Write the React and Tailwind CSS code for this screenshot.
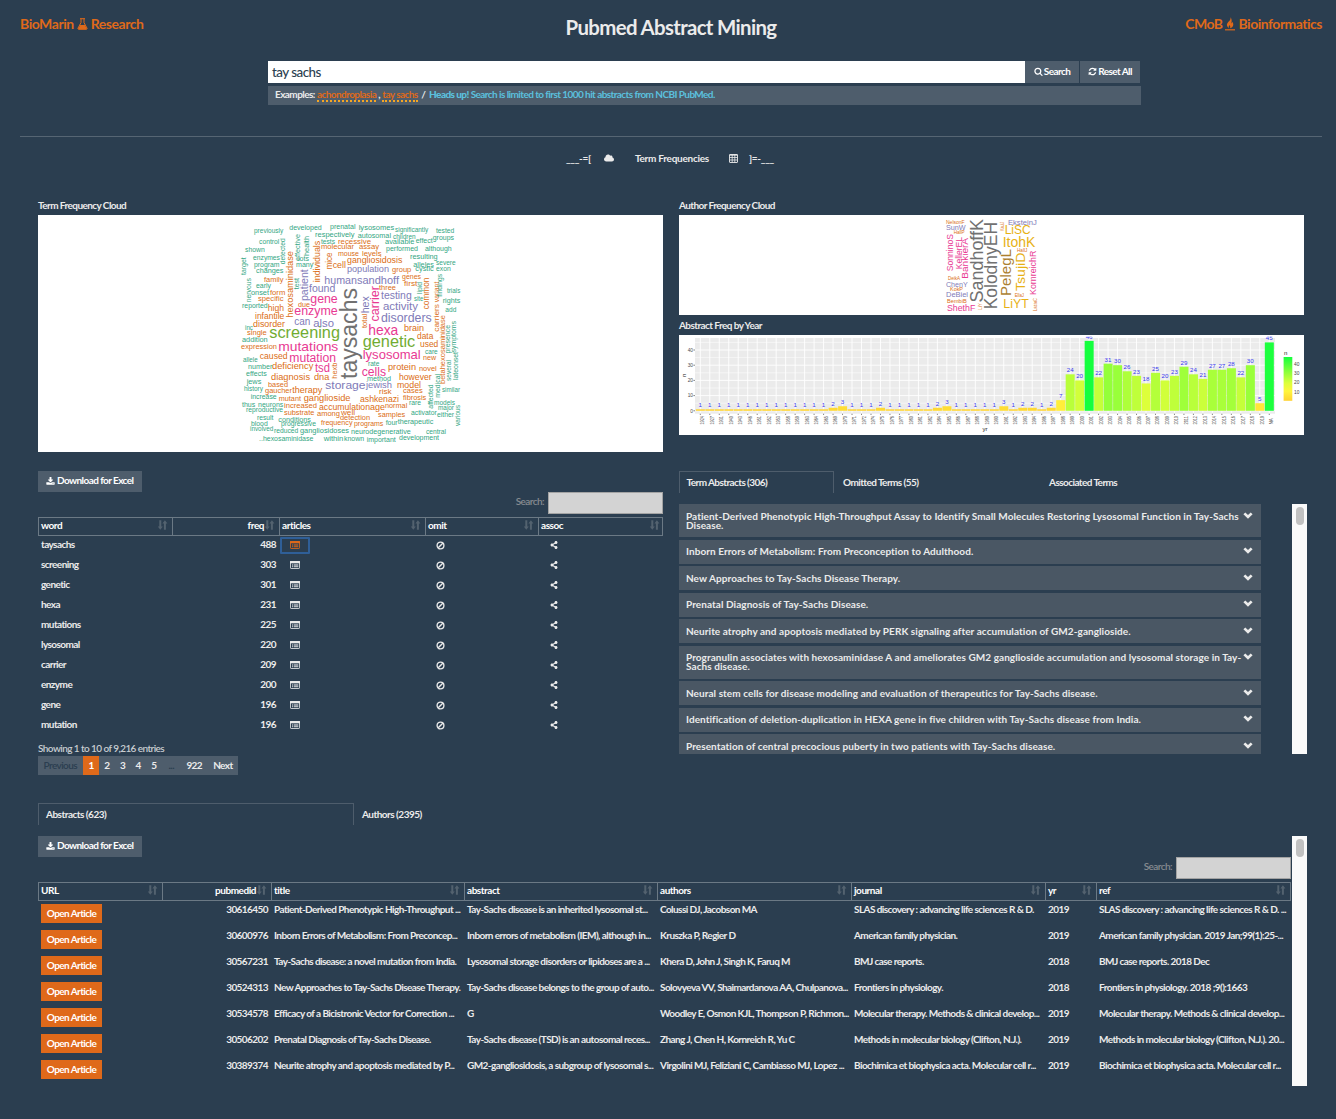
import React from 'react';
import { FaCloud, FaShareAlt } from 'react-icons/fa';

const TEAL = '#1b9e77', ORANGE = '#d95f02', PURPLE = '#7570b3', PINK = '#e7298a', GREEN = '#66a61e', GOLD = '#e6ab02', BROWN = '#a6761d', GRAY = '#666666';

// Horizontal words: text, left, right, baseline, size, colour
const H = [
  ['previously', 254, 283.3, 233, 7, TEAL], ['developed', 289.3, 321.7, 230, 7, TEAL], ['prenatal', 330, 355.5, 229, 7, TEAL],
  ['lysosomes', 358.7, 394.3, 230, 7, TEAL], ['significantly', 395, 428.3, 232, 7, TEAL], ['tested', 436, 454.3, 233, 7, TEAL],
  ['respectively', 315, 354.5, 237, 7, TEAL], ['autosomal', 357.7, 391, 238, 7, TEAL], ['children', 393, 415.7, 239, 7, TEAL],
  ['groups', 432.7, 454, 240, 7, TEAL], ['control', 259, 279.3, 244, 7, TEAL], ['tests', 321, 335, 243.5, 7, TEAL],
  ['recessive', 338, 371, 244, 7.6, ORANGE], ['available', 385, 414.3, 244, 7, TEAL], ['effect', 415.7, 432.7, 243, 7, TEAL],
  ['shown', 245, 264.7, 252, 7, TEAL], ['molecular', 321, 354, 249, 7.6, ORANGE], ['assay', 359, 379, 248.7, 7.8, ORANGE],
  ['performed', 386, 418, 251, 7, TEAL], ['although', 425, 451.7, 251, 7, TEAL], ['enzymes', 253, 280, 260, 7, TEAL],
  ['lots', 298, 309, 261, 7, TEAL], ['mouse', 338, 359, 256, 7.4, ORANGE], ['levels', 362, 381.5, 256, 7.4, ORANGE],
  ['program', 254, 279.5, 267, 7, TEAL], ['many', 296, 313.3, 267, 7, TEAL], ['cell', 332.7, 346, 268, 9, ORANGE],
  ['gangliosidosis', 347, 402.3, 263, 9.3, ORANGE], ['resulting', 410, 437.7, 259, 7, TEAL], ['alleles', 413.3, 434, 267, 7, TEAL],
  ['severe', 436, 455.7, 265, 7, TEAL], ['changes', 256, 283.5, 273, 7, TEAL], ['population', 347, 389, 272, 9.5, PURPLE],
  ['group', 392, 411.3, 272, 7.6, ORANGE], ['cystic', 415.3, 433.7, 271, 7, TEAL], ['exon', 436, 450.7, 271, 7, TEAL],
  ['family', 264, 283.5, 282, 7.6, ORANGE], ['human', 324.3, 357, 284, 10.8, PURPLE], ['sandhoff', 357, 399, 284, 11, PURPLE],
  ['genes', 402, 421, 279, 7.6, ORANGE], ['first', 404, 417.3, 285.5, 7.6, ORANGE], ['early', 256, 271, 287.5, 7, TEAL],
  ['found', 309, 335.3, 292, 10.5, PURPLE], ['three', 379, 396, 290, 7.8, ORANGE], ['onset', 251, 269, 295, 7.2, TEAL],
  ['form', 270, 285.3, 295, 7.8, ORANGE], ['specific', 258, 283.5, 301, 7.6, ORANGE], ['gene', 310.3, 337.7, 302.5, 12.3, PINK],
  ['testing', 381, 411.7, 299, 10.8, PURPLE], ['activity', 383, 418, 310, 11, PURPLE], ['site', 414, 423.3, 301, 7, TEAL],
  ['trials', 447, 460.3, 293, 7, TEAL], ['rights', 442.7, 460.3, 303, 7, TEAL], ['add', 445.3, 456.3, 312, 7, TEAL],
  ['reported', 242, 267.7, 308, 7, TEAL], ['due', 298, 310, 307, 7.8, ORANGE], ['high', 267.7, 284, 311, 9.2, ORANGE],
  ['enzyme', 294.3, 337.7, 315, 12.4, PINK], ['infantile', 255, 284.3, 319, 8.6, ORANGE], ['disorder', 253, 285, 327, 8.8, ORANGE],
  ['can', 294.3, 310.3, 324.5, 10.2, PURPLE], ['also', 313.3, 334, 326.7, 11, PURPLE], ['disorders', 381, 431.7, 322, 12.3, PURPLE],
  ['inc', 245, 253, 330, 7, TEAL], ['single', 247, 266.7, 335, 7.6, ORANGE], ['screening', 269.3, 340, 338, 16.3, GREEN],
  ['hexa', 368.3, 398.3, 334.7, 13.8, PINK], ['brain', 404, 424, 331, 8.8, ORANGE], ['addition', 242, 267.7, 342, 7, TEAL],
  ['expression', 241, 277, 349, 7.7, ORANGE], ['mutations', 278.3, 338.3, 351, 13.6, PINK], ['caused', 259.7, 287.7, 359, 8.8, ORANGE],
  ['mutation', 289.3, 336, 362, 12, PINK], ['allele', 243, 257.7, 361.5, 7, TEAL], ['number', 248, 272.3, 369, 7.2, TEAL],
  ['deficiency', 272, 313.3, 369, 9.4, ORANGE], ['tsd', 315, 330, 372, 12, PINK], ['effects', 246, 266.7, 376, 7, TEAL],
  ['diagnosis', 271, 310, 379.5, 9.3, ORANGE], ['dna', 314, 329.3, 379.5, 9.2, ORANGE], ['jews', 246.7, 261.3, 384, 7, TEAL],
  ['based', 268, 288, 387, 7.6, ORANGE], ['history', 244, 263, 391, 7, TEAL], ['gaucher', 265, 292, 393, 7.6, ORANGE],
  ['therapy', 292.3, 322.3, 392.5, 8.8, ORANGE], ['storage', 325.3, 365.5, 389, 11.6, PURPLE], ['jewish', 366, 392, 388, 9.5, PURPLE],
  ['increase', 250.7, 276.7, 399, 7, TEAL], ['mutant', 278.7, 301, 401, 7.4, ORANGE], ['ganglioside', 303.7, 350.5, 401, 9.2, ORANGE],
  ['thus', 242, 255.3, 407, 7, TEAL], ['neurons', 258, 283.3, 407, 7, TEAL], ['increased', 284, 317, 408, 7.8, ORANGE],
  ['accumulation', 319, 370, 410, 8.9, ORANGE], ['age', 370, 385, 410, 9, ORANGE], ['reproductive', 246, 283, 412, 7, TEAL],
  ['substrate', 284, 314.3, 415, 7.6, ORANGE], ['among', 317, 340, 416, 7.6, ORANGE], ['well', 341, 355, 415, 8, ORANGE],
  ['result', 257, 273.3, 420, 7, TEAL], ['conditions', 278.3, 311, 422, 7, TEAL], ['detection', 340, 370, 420, 7.6, ORANGE],
  ['frequency', 321, 352.5, 425, 7.6, ORANGE], ['blood', 251, 267.7, 426, 7, TEAL], ['progressive', 281, 316, 426, 7, TEAL],
  ['involved', 250, 273.3, 431, 7, TEAL], ['reduced', 274, 298.3, 433, 7, TEAL], ['gangliosidoses', 300, 349, 433, 7.2, TEAL],
  ['..hexosaminidase', 259, 313.3, 441, 7, TEAL], ['within', 323.7, 343.3, 441, 7, TEAL], ['known', 344, 364, 441, 7, TEAL],
  ['data', 417, 433.3, 339, 8.7, ORANGE], ['genetic', 362.7, 415.3, 346.5, 16.3, GREEN], ['used', 420, 438.3, 347, 8.7, ORANGE],
  ['care', 425, 437.7, 354, 7, TEAL], ['lysosomal', 362.7, 420.7, 359, 13, PINK], ['new', 423, 436, 360, 7.6, ORANGE],
  ['rate', 368, 379.3, 366, 7, TEAL], ['cells', 361.7, 386, 376, 12.2, PINK], ['protein', 388, 416, 370, 8.8, ORANGE],
  ['novel', 419, 436.7, 371, 7.6, ORANGE], ['however', 399, 431.7, 379.5, 8.8, ORANGE], ['method', 367, 391, 381, 7, TEAL],
  ['model', 397, 421, 388, 9, ORANGE], ['risk', 379, 391.7, 394, 7.6, ORANGE], ['cases', 403, 422.7, 393, 7.4, ORANGE],
  ['similar', 442, 460, 392, 7, TEAL], ['ashkenazi', 360, 399, 402, 8.8, ORANGE], ['fibrosis', 403, 426.3, 400, 7.4, ORANGE],
  ['rare', 409, 421, 405, 7, TEAL], ['models', 434, 455, 405, 7, TEAL], ['normal', 385, 407.3, 408, 7.6, ORANGE],
  ['major', 438, 454, 410, 7, TEAL], ['activator', 411, 436.7, 415, 7, TEAL], ['either', 437, 454, 417, 7, TEAL],
  ['samples', 378, 405.3, 417, 7.4, ORANGE], ['programs', 354, 383.3, 426, 7.4, ORANGE], ['four', 385.7, 397.7, 425, 7, TEAL],
  ['therapeutic', 397.7, 433.3, 424, 7, TEAL], ['neurodegenerative', 351, 410.7, 434, 7, TEAL], ['central', 426, 446, 434, 7, TEAL],
  ['important', 366.7, 395.7, 442, 7, TEAL], ['development', 399, 439, 440, 7, TEAL],
];

// Vertical words: text, top, bottom, baseline x, size, colour
const V = [
  ['effective', 234, 261, 300.3, 7, TEAL], ['health', 236, 256, 309, 7, TEAL], ['detected', 238.3, 264.3, 285.3, 7, TEAL],
  ['hexosaminidase', 251, 317.7, 292.8, 9.3, ORANGE], ['individuals', 240.7, 282.3, 320, 8.8, ORANGE], ['mice', 252.7, 269.3, 332, 8.8, ORANGE],
  ['target', 257.3, 275, 245.7, 7, TEAL], ['nervous', 278, 302.3, 250.5, 7, TEAL], ['test', 278, 289.3, 298.5, 7, TEAL],
  ['patient', 269.3, 301, 307.5, 10.5, PURPLE], ['taysachs', 288, 379, 357, 23, GRAY], ['hex', 296.3, 313.3, 369.3, 10.5, PURPLE],
  ['total', 313.7, 328, 367, 7.4, ORANGE], ['carrier', 286, 321.5, 378.8, 12.6, PINK], ['lipid', 282, 294, 421.5, 7, TEAL],
  ['common', 277.7, 309.3, 429, 8.4, ORANGE], ['variant', 281.7, 302.3, 439, 7.2, ORANGE], ['carriers', 304, 331.7, 439, 7.6, ORANGE],
  ['findings', 274, 296.7, 442.3, 7, TEAL], ['betahexosaminidase', 315, 384, 444.5, 7.4, ORANGE], ['presence', 325, 353.5, 449.7, 7, TEAL],
  ['symptoms', 321, 352.5, 455.7, 7, TEAL], ['several', 360, 381, 451.3, 7, TEAL], ['lateonset', 352, 380, 458, 7, TEAL],
  ['medical', 374, 397.7, 439.7, 7, TEAL], ['affected', 384.3, 408.7, 433.3, 7, TEAL], ['various', 405, 426, 460, 7, TEAL],
  ['hexb', 362.7, 378.7, 337.3, 7.4, ORANGE],
];

const AH = [
  ['NelsonF', 946, 964.7, 224, 5.3, ORANGE], ['SunW', 946, 965.7, 229.5, 7.2, PURPLE], ['HallP', 953.7, 964.7, 233.7, 5.2, ORANGE],
  ['EksteinJ', 1008, 1036.7, 225.2, 7.6, PURPLE], ['LiSC', 1004.7, 1030.7, 233.7, 12, GOLD], ['ItohK', 1002.7, 1035.3, 246.7, 14, GOLD],
  ['HallJ', 1017, 1027.3, 251.8, 5.2, ORANGE], ['DeikA', 948, 960, 279.8, 5.2, ORANGE], ['ChenY', 946, 967.7, 286.7, 7.4, PURPLE],
  ['KokP', 950, 963, 291, 5.2, ORANGE], ['DeBiel', 946, 968, 297.4, 7.4, PURPLE], ['BembiB', 947, 966.7, 303, 5.4, ORANGE],
  ['ShethF', 947, 975.3, 311, 9, PINK], ['LiYT', 1003.3, 1028.7, 308, 12.5, GOLD], ['EllaJ', 1014.7, 1024, 297.4, 5.2, ORANGE],
];
const AV = [
  ['SonninoS', 234, 271.3, 953.3, 9, PINK], ['KellerEL', 237, 269.3, 961.7, 9, PINK], ['BankierA', 238, 278.7, 968.3, 9, PINK],
  ['SandhoffK', 219, 302.5, 983, 17.8, GRAY], ['KolodnyEH', 222, 309.3, 997, 17.5, GRAY], ['KaulJ', 222, 230.7, 1004, 5.2, ORANGE],
  ['PelegL', 249, 296, 1011, 15.1, BROWN], ['TsujiD', 252.7, 291, 1024.7, 13.5, GOLD], ['KornreichR', 250.7, 295, 1036, 9, PINK],
  ['LiY', 303, 310, 982, 5.2, ORANGE], ['LazarC', 298, 311, 1037, 5.2, ORANGE],
];

function Words({ h, v }) {
  return (
    <g opacity="0.92">
      {h.map(([t, x0, x1, y, s, c]) => (
        <text key={'h' + t} x={x0} y={y} fontSize={s} fill={c} textLength={x1 - x0} lengthAdjust="spacingAndGlyphs">{t}</text>
      ))}
      {v.map(([t, y0, y1, x, s, c]) => (
        <text key={'v' + t} transform={`translate(${x} ${y1}) rotate(-90)`} fontSize={s} fill={c} textLength={y1 - y0} lengthAdjust="spacingAndGlyphs">{t}</text>
      ))}
    </g>
  );
}

const YEARS = [1924, 1927, 1931, 1940, 1943, 1946, 1951, 1952, 1953, 1958, 1959, 1963, 1964, 1965, 1969, 1970, 1971, 1972, 1974, 1975, 1976, 1977, 1980, 1981, 1982, 1984, 1985, 1986, 1987, 1988, 1989, 1990, 1991, 1992, 1993, 1994, 1996, 1997, 1998, 1999, 2000, 2001, 2002, 2003, 2004, 2005, 2006, 2007, 2008, 2009, 2010, 2011, 2012, 2013, 2014, 2015, 2016, 2017, 2018, 2019, 'NA'];
const COUNTS = [1, 1, 1, 1, 1, 1, 1, 1, 1, 1, 1, 1, 1, 1, 2, 3, 1, 1, 1, 2, 1, 1, 1, 1, 1, 2, 3, 1, 1, 1, 1, 1, 3, 1, 2, 2, 1, 2, 7, 24, 20, 46, 22, 31, 30, 26, 23, 18, 25, 20, 23, 29, 24, 21, 27, 27, 28, 22, 30, 5, 45];
const STOPS = [[1, 255, 213, 51], [7, 255, 238, 58], [12, 250, 255, 62], [18, 221, 255, 58], [24, 185, 255, 58], [31, 148, 255, 58], [46, 20, 255, 62]];
function barColor(n) {
  for (let i = 1; i < STOPS.length; i++) {
    const a = STOPS[i - 1], b = STOPS[i];
    if (n <= b[0]) {
      const f = (n - a[0]) / (b[0] - a[0]);
      return `rgb(${[1, 2, 3].map((k) => Math.round(a[k] + f * (b[k] - a[k]))).join(',')})`;
    }
  }
  return 'rgb(20,255,62)';
}

function YearChart() {
  const cx = (i) => 700.3 + i * 9.483;
  const yy = (n) => 410.8 - n * 1.52;
  return (
    <svg className="block h-[100px] w-[625px] bg-white font-['Liberation_Sans']" viewBox="679 335 625 100">
      <rect x="695" y="338" width="580" height="75.7" fill="#ebebeb" />
      {[5, 15, 25, 35, 45].map((n) => <line key={n} x1="695" x2="1275" y1={yy(n)} y2={yy(n)} stroke="#fff" strokeWidth="0.5" />)}
      {[0, 10, 20, 30, 40].map((n) => (
        <g key={n}>
          <line x1="695" x2="1275" y1={yy(n)} y2={yy(n)} stroke="#fff" strokeWidth="0.9" />
          <line x1="693.4" x2="695" y1={yy(n)} y2={yy(n)} stroke="#333" strokeWidth="0.6" />
          <text x="693" y={yy(n) + 1.8} fontSize="4.8" fill="#4d4d4d" textAnchor="end">{n}</text>
        </g>
      ))}
      {YEARS.map((y, i) => (
        <g key={y}>
          <line x1={cx(i)} x2={cx(i)} y1="338" y2="413.7" stroke="#fff" strokeWidth="0.9" />
          <line x1={cx(i)} x2={cx(i)} y1="413.7" y2="415" stroke="#333" strokeWidth="0.6" />
          <text transform={`translate(${cx(i) + 4} 424.5) rotate(-90)`} fontSize="5.2" fill="#4d4d4d" textLength={y === 'NA' ? 6.5 : 8.3} lengthAdjust="spacingAndGlyphs">{y}</text>
        </g>
      ))}
      {YEARS.map((y, i) => {
        const n = COUNTS[i];
        return (
          <g key={y}>
            <rect x={cx(i) - 4.45} y={yy(n)} width="9" height={n * 1.52} fill={barColor(n)} />
            <text x={cx(i)} y={yy(n) - 2} fontSize="6.2" fill="#3a3af0" textAnchor="middle">{n}</text>
          </g>
        );
      })}
      <rect x="679" y="335" width="625" height="1.6" fill="#fff" />
      <text x="985" y="431" fontSize="6" fill="#222" textAnchor="middle">yr</text>
      <text transform="translate(686 377) rotate(-90)" fontSize="6" fill="#222">n</text>
      <text x="1284" y="355" fontSize="6" fill="#222">n</text>
      <defs>
        <linearGradient id="scale" x1="0" y1="0" x2="0" y2="1">
          <stop offset="0" stopColor="#14ff3e" /><stop offset="0.37" stopColor="#94ff3a" /><stop offset="0.6" stopColor="#ddff3a" /><stop offset="0.78" stopColor="#fff53e" /><stop offset="1" stopColor="#ffd233" />
        </linearGradient>
      </defs>
      <rect x="1283.6" y="357" width="8.7" height="43.8" fill="url(#scale)" />
      {[[40, 363.7], [30, 373], [20, 382.6], [10, 392]].map(([n, y]) => (
        <text key={n} x="1294" y={y + 1.8} fontSize="4.8" fill="#444">{n}</text>
      ))}
    </svg>
  );
}

const SearchIcon = () => (
  <svg viewBox="0 0 1792 1792" className="size-[9px] fill-current"><path d="M1216 832q0-185-131.5-316.5t-316.5-131.5-316.5 131.5-131.5 316.5 131.5 316.5 316.5 131.5 316.5-131.5 131.5-316.5zm512 832q0 52-38 90t-90 38q-54 0-90-38l-343-342q-179 124-399 124-143 0-273.5-55.5t-225-150-150-225-55.5-273.5 55.5-273.5 150-225 225-150 273.5-55.5 273.5 55.5 225 150 150 225 55.5 273.5q0 220-124 399l343 343q37 37 37 90z" /></svg>
);
const RefreshIcon = () => (
  <svg viewBox="0 0 1792 1792" className="size-[9px] fill-current"><path d="M1639 1056q0 5-1 7-64 268-268 434.5t-478 166.5q-146 0-282.5-55t-243.5-157l-129 129q-19 19-45 19t-45-19-19-45v-448q0-26 19-45t45-19h448q26 0 45 19t19 45-19 45l-137 137q71 66 161 102t187 36q134 0 250-65t186-179q11-17 53-117 8-23 30-23h192q13 0 22.5 9.5t9.5 22.5zm25-800v448q0 26-19 45t-45 19h-448q-26 0-45-19t-19-45 19-45l138-138q-148-137-349-137-134 0-250 65t-186 179q-11 17-53 117-8 23-30 23h-199q-13 0-22.5-9.5t-9.5-22.5v-7q65-268 270-434.5t480-166.5q146 0 284 55.5t245 156.5l130-129q19-19 45-19t45 19 19 45z" /></svg>
);
const DownloadIcon = () => (
  <svg viewBox="0 0 1792 1792" className="size-[9px] fill-current"><path d="M1344 1344q0-26-19-45t-45-19-45 19-19 45 19 45 45 19 45-19 19-45zm256 0q0-26-19-45t-45-19-45 19-19 45 19 45 45 19 45-19 19-45zm128-224v320q0 40-28 68t-68 28h-1472q-40 0-68-28t-28-68v-320q0-40 28-68t68-28h465l135 136q58 56 136 56t136-56l136-136h464q40 0 68 28t28 68zm-325-569q17 41-14 70l-448 448q-18 19-45 19t-45-19l-448-448q-31-29-14-70 17-39 59-39h256v-448q0-26 19-45t45-19h256q26 0 45 19t19 45v448h256q42 0 59 39z" /></svg>
);
const FlaskIcon = () => (
  <svg viewBox="0 0 11 12" className="h-3 w-[11px]" fill="none" stroke="currentColor"><path d="M3 .7h5" strokeWidth="1.1" /><path d="M4 1v3.6L1 10.2c-.3.7 0 1.1.7 1.1h7.6c.7 0 1-.4.7-1.1L7 4.600V1" strokeWidth="1" /><path d="M3.200 7h4.600l2 3.500c.2.500 0 .8-.4.8H1.600c-.4 0-.6-.3-.4-.8z" fill="currentColor" stroke="none" /></svg>
);
const FireIcon = () => (
  <svg viewBox="0 0 10 14" className="h-[14px] w-[10px] fill-current"><path d="M5.300 0c.7 1.500.2 2.500-1 4C2.800 5.500 1.500 6.800 2 8.700c.3 1 1 1.800 2 2.500-.5-1.300-.2-2.200.5-3.100.3.800.8 1.200.8 2 0 .4-.1.800-.3 1.200 1.900-.5 3.300-1.800 3.300-3.700 0-1.200-.5-2-1-2.800 0 .9-.3 1.400-.9 1.700C6.800 4 7 1.700 5.300 0z" /><rect y="12.200" width="10" height="1.200" /></svg>
);
const TableIcon = () => (
  <svg viewBox="0 0 9 9" className="size-[9px]" fill="none" stroke="currentColor"><rect x=".5" y=".5" width="8" height="8" rx=".5" strokeWidth=".9" /><path d="M.5 1h8" strokeWidth="1.200" /><path d="M.5 3.500h8M.5 6h8M3.200 1v7.500M5.800 1v7.500" strokeWidth=".8" /></svg>
);
const ArticlesIcon = () => (
  <svg viewBox="0 0 10 8" className="h-2 w-[10px]" fill="none" stroke="currentColor"><rect x=".5" y=".5" width="9" height="7" rx=".6" strokeWidth="1" strokeOpacity=".8" /><path d="M0 1.200h10" strokeWidth="2.200" /><path d="M2 4h1M3.700 4h4.600M2 5.600h1M3.700 5.600h4.600" strokeWidth="1.300" strokeOpacity=".7" /></svg>
);
const BanIcon = () => (
  <svg viewBox="0 0 9 9" className="size-[9px]" fill="none" stroke="currentColor" strokeWidth="1.350"><circle cx="4.500" cy="4.500" r="3.400" /><path d="M2.200 6.800l4.600-4.600" /></svg>
);
const SortIcon = () => (
  <svg viewBox="0 0 10 10" className="h-[10px] w-[11px] shrink-0 fill-[#53626f]"><path d="M1.800 .3h2v6.200h1.500L2.800 9.800.300 6.500h1.500zM6.400 9.700V3.500H4.900L7.400.2l2.500 3.300H8.400v6.200z" /></svg>
);
const ChevronIcon = () => (
  <svg viewBox="0 0 10 7" className="-ml-2 h-[7px] w-[10px] shrink-0 fill-[#ebebeb]"><path d="M.4 2.200L2.300.4 5 3 7.700.4l1.900 1.800L5 6.800z" /></svg>
);

const DownloadButton = () => (
  <button className="flex h-[21px] w-[104px] items-center gap-px bg-[#4e5d6c] pb-px pl-2 text-white">
    <DownloadIcon /><span className="pb-[3px] pl-px">Download for Excel</span>
  </button>
);
const TableSearch = () => (
  <div className="flex h-[22px] items-center justify-end gap-1">
    <span className="pb-[5px] font-semibold text-[#868b90]">Search:</span>
    <input className="h-[22px] w-[115px] border border-[#a3a3a3] bg-[#d3d3d3] outline-none" />
  </div>
);
const Th = ({ children, right }) => (
  <div className="flex items-center justify-between border-r border-[#6b7985] pl-[2px] pr-1 last:border-r-0">
    <span className={right ? 'flex-1 pb-1 text-right' : 'pb-1'}>{children}</span>
    <div className="pb-1"><SortIcon /></div>
  </div>
);
const Scrollbar = () => (
  <div className="flex h-[250px] w-[15px] justify-center bg-[#fafafa] pt-[3px]"><div className="h-[18px] w-2 rounded-full bg-[#c1c1c1]" /></div>
);

const TERMS = [['taysachs', 488], ['screening', 303], ['genetic', 301], ['hexa', 231], ['mutations', 225], ['lysosomal', 220], ['carrier', 209], ['enzyme', 200], ['gene', 196], ['mutation', 196]];

const TITLES = [
  'Patient-Derived Phenotypic High-Throughput Assay to Identify Small Molecules Restoring Lysosomal Function in Tay-Sachs Disease.',
  'Inborn Errors of Metabolism: From Preconception to Adulthood.',
  'New Approaches to Tay-Sachs Disease Therapy.',
  'Prenatal Diagnosis of Tay-Sachs Disease.',
  'Neurite atrophy and apoptosis mediated by PERK signaling after accumulation of GM2-ganglioside.',
  'Progranulin associates with hexosaminidase A and ameliorates GM2 ganglioside accumulation and lysosomal storage in Tay-Sachs disease.',
  'Neural stem cells for disease modeling and evaluation of therapeutics for Tay-Sachs disease.',
  'Identification of deletion-duplication in HEXA gene in five children with Tay-Sachs disease from India.',
  'Presentation of central precocious puberty in two patients with Tay-Sachs disease.',
];

const ROWS = [
  ['30616450', 'Patient-Derived Phenotypic High-Throughput ...', 'Tay-Sachs disease is an inherited lysosomal st...', 'Colussi DJ, Jacobson MA', 'SLAS discovery : advancing life sciences R & D.', '2019', 'SLAS discovery : advancing life sciences R & D. ...'],
  ['30600976', 'Inborn Errors of Metabolism: From Preconcep...', 'Inborn errors of metabolism (IEM), although in...', 'Kruszka P, Regier D', 'American family physician.', '2019', 'American family physician. 2019 Jan;99(1):25-...'],
  ['30567231', 'Tay-Sachs disease: a novel mutation from India.', 'Lysosomal storage disorders or lipidoses are a ...', 'Khera D, John J, Singh K, Faruq M', 'BMJ case reports.', '2018', 'BMJ case reports. 2018 Dec'],
  ['30524313', 'New Approaches to Tay-Sachs Disease Therapy.', 'Tay-Sachs disease belongs to the group of auto...', 'Solovyeva VV, Shaimardanova AA, Chulpanova...', 'Frontiers in physiology.', '2018', 'Frontiers in physiology. 2018 ;9():1663'],
  ['30534578', 'Efficacy of a Bicistronic Vector for Correction ...', 'G', 'Woodley E, Osmon KJL, Thompson P, Richmon...', 'Molecular therapy. Methods & clinical develop...', '2019', 'Molecular therapy. Methods & clinical develop...'],
  ['30506202', 'Prenatal Diagnosis of Tay-Sachs Disease.', 'Tay-Sachs disease (TSD) is an autosomal reces...', 'Zhang J, Chen H, Kornreich R, Yu C', 'Methods in molecular biology (Clifton, N.J.).', '2019', 'Methods in molecular biology (Clifton, N.J.). 20...'],
  ['30389374', 'Neurite atrophy and apoptosis mediated by P...', 'GM2-gangliosidosis, a subgroup of lysosomal s...', 'Virgolini MJ, Feliziani C, Cambiasso MJ, Lopez ...', 'Biochimica et biophysica acta. Molecular cell r...', '2019', 'Biochimica et biophysica acta. Molecular cell r...'],
];

export default function App() {
  return (
    <div className="h-[1119px] w-[1336px] overflow-hidden bg-[#2b3e50] font-['Lato',sans-serif] text-[10px] font-bold leading-[12px] tracking-[-0.570px] whitespace-nowrap text-[#ebebeb]">
      <header className="grid h-[61px] grid-cols-[1fr_auto_1fr] pl-5 pr-3.5 pt-[15px]">
        <div className="flex h-[18px] items-center gap-[3px] text-sm tracking-[-0.450px] text-[#df691a]"><span>BioMarin</span><FlaskIcon /><span>Research</span></div>
        <h1 className="text-[20.400px] leading-6 tracking-[-0.650px]">Pubmed Abstract Mining</h1>
        <div className="flex h-[18px] items-center justify-end gap-[3px] text-sm tracking-[-0.500px] text-[#df691a]"><span>CMoB</span><FireIcon /><span>Bioinformatics</span></div>
      </header>

      <div className="ml-[268px] flex h-[22px] w-[872px]">
        <div className="flex flex-1 items-center bg-white pl-1 text-[13.333px] font-medium tracking-[-0.500px] text-[#2b3e50]">tay sachs</div>
        <button className="flex w-[54px] items-center justify-center gap-px bg-[#4e5d6c] pb-0.5 text-white"><SearchIcon /><span>Search</span></button>
        <button className="ml-px flex w-[60px] items-center justify-center gap-px bg-[#4e5d6c] pb-0.5 text-white"><RefreshIcon /><span>Reset All</span></button>
      </div>
      <div className="ml-[268px] mt-[3px] flex h-[19px] w-[873px] gap-[2.200px] bg-[#4e5d6c] pl-[7px] pt-0.5">
        <span>Examples:</span>
        <span className="h-[14px] border-b-2 border-dotted border-[#f5a623] text-[#df691a]">achondroplasia</span>
        <span>,</span>
        <span className="h-[14px] border-b-2 border-dotted border-[#f5a623] text-[#df691a]">tay sachs</span>
        <span className="px-[1.500px]">/</span>
        <span className="text-[#5bc0de]"><b className="font-black">Heads up!</b> Search is limited to first 1000 hit abstracts from NCBI PubMed.</span>
      </div>
      <div className="ml-5 mt-[31px] h-px w-[1302px] bg-[#566573]" />

      <div className="ml-[566px] mt-[14px] flex h-[14px] w-[211px] items-center">
        <span className="w-[38px] tracking-[-0.300px]">___-=[</span><FaCloud className="h-[10px] w-[10px]" /><span className="w-[94px] pl-[21px] tracking-[-0.270px]">Term Frequencies</span><span className="w-[41px] pl-[21px]"><TableIcon /></span><span className="tracking-[-0.300px]">]=-___</span>
      </div>

      <main className="mt-[34px] grid grid-cols-[625px_628px] gap-x-4 pl-[38px]">
        <section>
          <h2 className="h-4">Term Frequency Cloud</h2>
          <svg className="block h-[237px] w-[625px] bg-white font-['Liberation_Sans'] font-normal tracking-normal" viewBox="38 215 625 237"><Words h={H} v={V} /></svg>
        </section>
        <section className="font-normal tracking-normal">
          <h2 className="h-4 font-bold tracking-[-0.570px]">Author Frequency Cloud</h2>
          <svg className="block h-[100px] w-[625px] bg-white font-['Liberation_Sans']" viewBox="679 215 625 100"><Words h={AH} v={AV} /></svg>
          <h2 className="h-5 pt-1 font-bold tracking-[-0.570px]">Abstract Freq by Year</h2>
          <YearChart />
        </section>

        <section className="mt-[19px]">
          <DownloadButton />
          <TableSearch />
          <div className="mt-[3px] grid h-[19px] grid-cols-[134px_107px_146px_113px_125px] border border-[#6b7985] tracking-[-0.450px] text-white">
            <Th>word</Th><Th right>freq</Th><Th>articles</Th><Th>omit</Th><Th>assoc</Th>
          </div>
          <div className="-mt-px">
            {TERMS.map(([w, n], i) => (
              <div key={w} className="grid h-5 grid-cols-[134px_107px_146px_113px_125px] items-center">
                <span className="pb-0.5 pl-[3px]">{w}</span>
                <span className="pb-0.5 pr-[3px] text-right">{n}</span>
                <div className={i === 0 ? 'ml-px flex h-[17px] w-[30px] items-center justify-center rounded-[1px] border-2 border-[#2f5f98] text-[#df691a]' : 'ml-px flex h-[17px] w-[30px] items-center justify-center text-[#ebebeb]'}><ArticlesIcon /></div>
                <div className="pl-[11px]"><BanIcon /></div>
                <div className="pl-[11.500px]"><FaShareAlt className="size-[8px]" /></div>
              </div>
            ))}
          </div>
          <div className="mt-[7px] h-[13px] font-semibold tracking-[-0.570px] text-[#c8cdd1]">Showing 1 to 10 of 9,216 entries</div>
          <div className="mt-px flex h-[19px] w-[200px] items-center bg-[#4e5d6c]">
            <span className="w-[45px] pb-0.5 pl-[5.500px] font-semibold text-[#2b3e50]">Previous</span>
            <span className="flex h-full w-4 items-center justify-center bg-[#df691a] pb-0.5 text-white">1</span>
            {[2, 3, 4, 5].map((n) => <span key={n} className="w-[15.700px] pb-0.5 text-center">{n}</span>)}
            <span className="w-[19px] pb-0.5 text-center text-[#2b3e50]">...</span>
            <span className="w-[27px] pb-0.5 text-center">922</span>
            <span className="flex-1 pb-0.5 text-center">Next</span>
          </div>
        </section>

        <section className="mt-[19px]">
          <div className="flex h-[22px]">
            <div className="w-[155px] border border-b-0 border-[#4e5d6c] pl-[6.500px] pt-[3.500px]">Term Abstracts (306)</div>
            <div className="w-[206px] pl-[9px] pt-[4.500px]">Omitted Terms (55)</div>
            <div className="pl-[9px] pt-[4.500px]">Associated Terms</div>
          </div>
          <div className="mt-[11px] flex h-[250px] justify-between overflow-hidden">
            <div className="flex w-[582px] flex-col gap-[2.500px]">
              {TITLES.map((t) => (
                <div key={t} className="flex min-h-6 shrink-0 items-start justify-between bg-[#4a5764] py-[7.500px] pl-[7px] pr-2 leading-[9px] tracking-[0.065px]">
                  <span className="w-[562px] whitespace-normal">{t}</span><ChevronIcon />
                </div>
              ))}
            </div>
            <Scrollbar />
          </div>
        </section>
      </main>

      <section className="ml-[38px] mt-7 w-[1269px]">
        <div className="flex h-[22px]">
          <div className="w-[316px] border border-b-0 border-[#4e5d6c] pl-[7px] pt-[3.500px] tracking-[-0.500px]">Abstracts (623)</div>
          <div className="pl-2 pt-[4.500px] tracking-[-0.500px]">Authors (2395)</div>
        </div>
        <div className="mt-[11px] flex h-[250px] justify-between overflow-hidden">
          <div className="w-[1253px]">
            <DownloadButton />
            <TableSearch />
            <div className="mt-[3px] grid h-[19px] grid-cols-[124px_109px_193px_193px_194px_194px_51px_193px] border border-[#6b7985] tracking-[-0.450px] text-white">
              <Th>URL</Th><Th right>pubmedid</Th><Th>title</Th><Th>abstract</Th><Th>authors</Th><Th>journal</Th><Th>yr</Th><Th>ref</Th>
            </div>
            {ROWS.map((r) => (
              <div key={r[0]} className="grid h-[26px] grid-cols-[124px_109px_193px_193px_194px_194px_51px_195px] pt-0.5">
                <button className="ml-[3px] mt-px h-[19px] w-[61px] bg-[#df691a] pb-px text-white">Open Article</button>
                <span className="pr-[3px] text-right">{r[0]}</span>
                {r.slice(1).map((c, k) => <span key={k} className="pl-[3px]">{c}</span>)}
              </div>
            ))}
          </div>
          <Scrollbar />
        </div>
      </section>
    </div>
  );
}
